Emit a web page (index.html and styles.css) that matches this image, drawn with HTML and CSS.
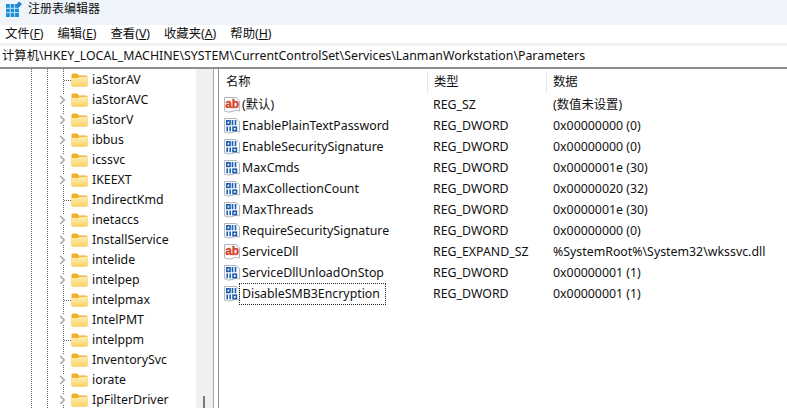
FILE: index.html
```html
<!DOCTYPE html>
<html lang="zh-CN">
<head>
<meta charset="utf-8">
<title>注册表编辑器</title>
<link rel="stylesheet" href="styles.css">
</head>
<body>
<svg class="defs" width="0" height="0">
  <defs>
    <linearGradient id="fold" x1="0" y1="0" x2="0" y2="1">
      <stop offset="0" stop-color="#fdeeb4"/>
      <stop offset="1" stop-color="#fbd467"/>
    </linearGradient>
  </defs>
  <symbol id="folder" viewBox="0 0 17 14">
    <path d="M0.5 2 Q0.5 0.5 2 0.5 H6 L8 2.5 H15 Q16.5 2.5 16.5 4 V12 Q16.5 13.5 15 13.5 H2 Q0.5 13.5 0.5 12 Z" fill="#efb02a"/>
    <path d="M0.5 5 H7 L8.5 3.7 H15 Q16.5 3.7 16.5 5 V12 Q16.5 13.5 15 13.5 H2 Q0.5 13.5 0.5 12 Z" fill="url(#fold)"/>
  </symbol>
  <symbol id="chev" viewBox="0 0 7 10">
    <path d="M1.2 1 L5.2 5 L1.2 9" fill="none" stroke="#a6a6a6" stroke-width="1.6"/>
  </symbol>
  <symbol id="paper" viewBox="0 0 16 16">
    <path d="M0.5 0.5 H12 L15.5 3.5 V14 Q12 12.5 8 14.5 Q4 16 0.5 14 Z" fill="#fbfbfb" stroke="#b4b8be"/>
  </symbol>
  <symbol id="bin" viewBox="0 0 16 16">
    <use href="#paper" width="16" height="16"/>
    <g fill="none" stroke="#1a5fb4" stroke-width="1.6">
      <rect x="2.8" y="2.8" width="3.2" height="3.6"/>
      <path d="M8.5 2 V7.2"/>
      <path d="M11.5 2 V7.2"/>
      <path d="M3.2 8.4 V13.2"/>
      <path d="M6.2 8.4 V13.2"/>
      <rect x="9" y="9.2" width="3.4" height="3.4"/>
    </g>
  </symbol>
</svg>

<header class="titlebar">
  <svg class="appicon" width="16" height="16" viewBox="0 0 16 16">
    <rect x="0" y="3" width="13" height="13" fill="#1b8fd6"/>
    <path d="M0 7.3H13M0 11.6H13M4.3 3V16M8.6 3V16" stroke="#bfe3f7" stroke-width="1"/>
    <path d="M13 0.5 L16 3 L13.5 6 L10.5 3.5 Z" fill="#2a7fc4"/>
  </svg>
  <span class="title">注册表编辑器</span>
</header>

<nav class="menubar">
  <span class="menu">文件(<u>F</u>)</span>
  <span class="menu">编辑(<u>E</u>)</span>
  <span class="menu">查看(<u>V</u>)</span>
  <span class="menu">收藏夹(<u>A</u>)</span>
  <span class="menu">帮助(<u>H</u>)</span>
</nav>

<div class="address">计算机\HKEY_LOCAL_MACHINE\SYSTEM\CurrentControlSet\Services\LanmanWorkstation\Parameters</div>

<main class="panes">
  <section class="tree">
    <div class="tree-rows">
      <div class="node leaf"><svg class="folder"><use href="#folder"/></svg><span>iaStorAV</span></div>
      <div class="node"><svg class="chev"><use href="#chev"/></svg><svg class="folder"><use href="#folder"/></svg><span>iaStorAVC</span></div>
      <div class="node"><svg class="chev"><use href="#chev"/></svg><svg class="folder"><use href="#folder"/></svg><span>iaStorV</span></div>
      <div class="node"><svg class="chev"><use href="#chev"/></svg><svg class="folder"><use href="#folder"/></svg><span>ibbus</span></div>
      <div class="node"><svg class="chev"><use href="#chev"/></svg><svg class="folder"><use href="#folder"/></svg><span>icssvc</span></div>
      <div class="node"><svg class="chev"><use href="#chev"/></svg><svg class="folder"><use href="#folder"/></svg><span>IKEEXT</span></div>
      <div class="node leaf"><svg class="folder"><use href="#folder"/></svg><span>IndirectKmd</span></div>
      <div class="node"><svg class="chev"><use href="#chev"/></svg><svg class="folder"><use href="#folder"/></svg><span>inetaccs</span></div>
      <div class="node"><svg class="chev"><use href="#chev"/></svg><svg class="folder"><use href="#folder"/></svg><span>InstallService</span></div>
      <div class="node"><svg class="chev"><use href="#chev"/></svg><svg class="folder"><use href="#folder"/></svg><span>intelide</span></div>
      <div class="node"><svg class="chev"><use href="#chev"/></svg><svg class="folder"><use href="#folder"/></svg><span>intelpep</span></div>
      <div class="node leaf"><svg class="folder"><use href="#folder"/></svg><span>intelpmax</span></div>
      <div class="node"><svg class="chev"><use href="#chev"/></svg><svg class="folder"><use href="#folder"/></svg><span>IntelPMT</span></div>
      <div class="node leaf"><svg class="folder"><use href="#folder"/></svg><span>intelppm</span></div>
      <div class="node"><svg class="chev"><use href="#chev"/></svg><svg class="folder"><use href="#folder"/></svg><span>InventorySvc</span></div>
      <div class="node"><svg class="chev"><use href="#chev"/></svg><svg class="folder"><use href="#folder"/></svg><span>iorate</span></div>
      <div class="node"><svg class="chev"><use href="#chev"/></svg><svg class="folder"><use href="#folder"/></svg><span>IpFilterDriver</span></div>
    </div>
    <div class="scrollbar"><div class="thumb"></div></div>
  </section>
  <div class="splitter"></div>
  <section class="list">
    <div class="row head"><span class="name">名称</span><span class="type">类型</span><span class="data">数据</span></div>
    <div class="row"><span class="name"><svg class="ico" viewBox="0 0 16 16"><use href="#paper" width="16" height="16"/><text x="1.2" y="10.8" class="ab-text">ab</text></svg><span class="label">(默认)</span></span><span class="type">REG_SZ</span><span class="data">(数值未设置)</span></div>
    <div class="row"><span class="name"><svg class="ico"><use href="#bin"/></svg><span class="label">EnablePlainTextPassword</span></span><span class="type">REG_DWORD</span><span class="data">0x00000000 (0)</span></div>
    <div class="row"><span class="name"><svg class="ico"><use href="#bin"/></svg><span class="label">EnableSecuritySignature</span></span><span class="type">REG_DWORD</span><span class="data">0x00000000 (0)</span></div>
    <div class="row"><span class="name"><svg class="ico"><use href="#bin"/></svg><span class="label">MaxCmds</span></span><span class="type">REG_DWORD</span><span class="data">0x0000001e (30)</span></div>
    <div class="row"><span class="name"><svg class="ico"><use href="#bin"/></svg><span class="label">MaxCollectionCount</span></span><span class="type">REG_DWORD</span><span class="data">0x00000020 (32)</span></div>
    <div class="row"><span class="name"><svg class="ico"><use href="#bin"/></svg><span class="label">MaxThreads</span></span><span class="type">REG_DWORD</span><span class="data">0x0000001e (30)</span></div>
    <div class="row"><span class="name"><svg class="ico"><use href="#bin"/></svg><span class="label">RequireSecuritySignature</span></span><span class="type">REG_DWORD</span><span class="data">0x00000000 (0)</span></div>
    <div class="row"><span class="name"><svg class="ico" viewBox="0 0 16 16"><use href="#paper" width="16" height="16"/><text x="1.2" y="10.8" class="ab-text">ab</text></svg><span class="label">ServiceDll</span></span><span class="type">REG_EXPAND_SZ</span><span class="data">%SystemRoot%\System32\wkssvc.dll</span></div>
    <div class="row"><span class="name"><svg class="ico"><use href="#bin"/></svg><span class="label">ServiceDllUnloadOnStop</span></span><span class="type">REG_DWORD</span><span class="data">0x00000001 (1)</span></div>
    <div class="row"><span class="name"><svg class="ico"><use href="#bin"/></svg><span class="label focus">DisableSMB3Encryption</span></span><span class="type">REG_DWORD</span><span class="data">0x00000001 (1)</span></div>
  </section>
</main>
</body>
</html>
```
FILE: styles.css
```css
* { box-sizing: border-box; }
html, body { margin: 0; height: 100%; overflow: hidden; }
body {
  width: 787px;
  height: 408px;
  background: #fff;
  color: #111;
  font: 12.35px/16px "Noto Sans", "Noto Sans CJK SC", sans-serif;
  display: flex;
  flex-direction: column;
}
.defs { position: absolute; }
.ab-text { font: bold 12px "Liberation Sans", sans-serif; fill: #d9401f; stroke: #d9401f; stroke-width: 0.3px; }

.titlebar {
  height: 25px;
  background: #eef4f9;
  display: flex;
  align-items: flex-start;
  gap: 6px;
  padding: 1px 0 0 6px;
  flex: none;
}
.title { font-size: 12px; line-height: 16px; }

.menubar {
  height: 18px;
  background: #fff;
  display: flex;
  gap: 14px;
  padding-left: 5px;
  align-items: center;
  flex: none;
}
.address {
  flex: none;
  height: 26px;
  padding: 2px 0 0 2px;
  border-top: 3px solid #f0f0f0;
  border-bottom: 2px solid #8e8e8e;
  line-height: 15px;
  white-space: nowrap;
}

.panes { flex: 1; display: flex; min-height: 0; }

.tree {
  width: 213px;
  flex: none;
  display: flex;
  overflow: hidden;
  background-image:
    repeating-linear-gradient(to bottom, #666 0 1px, transparent 1px 2px),
    repeating-linear-gradient(to bottom, #666 0 1px, transparent 1px 2px),
    repeating-linear-gradient(to bottom, #666 0 1px, transparent 1px 2px);
  background-size: 1px 100%;
  background-position: 31px 0, 47px 0, 63px 0;
  background-repeat: no-repeat;
}
.tree-rows { width: 196px; flex: none; padding-top: 1px; }
.node {
  height: 20px;
  display: flex;
  align-items: center;
  padding-left: 59px;
  white-space: nowrap;
}
.node span { margin-left: 4px; }
.chev { width: 7px; height: 10px; margin-right: 5px; background: #fff; }
.leaf { padding-left: 71px; position: relative; }
.leaf::before {
  content: "";
  position: absolute;
  left: 64px;
  top: 10px;
  width: 7px;
  border-top: 1px dotted #666;
}
.folder { width: 17px; height: 14px; flex: none; }
.scrollbar { width: 17px; flex: none; background: #f0f0f0; position: relative; }
.thumb {
  position: absolute;
  left: 7px;
  bottom: 0;
  width: 2px;
  height: 12px;
  background: #7a7a7a;
}
.splitter { width: 6px; flex: none; background: #fff; border-right: 1px solid #8e8e96; border-left: 1px solid #a8a8b0; }

.list { flex: 1; min-width: 0; padding-top: 2px; }
.row {
  height: 21px;
  display: flex;
  align-items: center;
  white-space: nowrap;
}
.head { height: 22px; margin-bottom: 1px; }
.name { width: 209px; padding-left: 5px; display: flex; align-items: center; flex: none; }
.head .name { padding-left: 7px; }
.type { width: 120px; flex: none; padding-left: 5px; }
.data { flex: 1; padding-left: 5px; }
.head .type, .head .data { height: 22px; line-height: 22px; border-left: 1px solid #e5e5e5; padding-left: 6px; margin-left: -1px; }
.ico { width: 16px; height: 16px; flex: none; margin-right: 1px; }
.label { padding: 0 1px; }
.focus { outline: 1px dotted #222; outline-offset: 0; padding: 2px 5px 2px 2px; margin-left: -1px; }
```
